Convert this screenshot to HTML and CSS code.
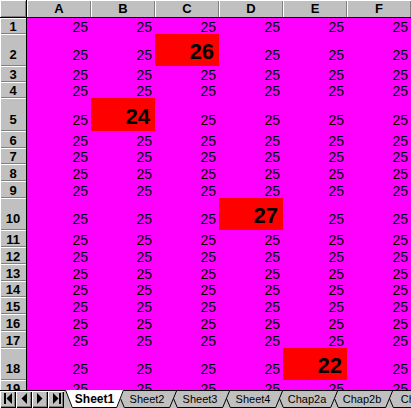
FILE: index.html
```html
<!DOCTYPE html>
<html>
<head>
<meta charset="utf-8">
<link rel="stylesheet" href="styles.css">
</head>
<body>
<div class="app">
  <div class="sheet">
    <div class="corner"></div>
    <div class="ch">A</div><div class="ch">B</div><div class="ch">C</div><div class="ch">D</div><div class="ch">E</div><div class="ch">F</div>

    <div class="rh">1</div><div class="c">25</div><div class="c">25</div><div class="c">25</div><div class="c">25</div><div class="c">25</div><div class="c">25</div>
    <div class="rh t">2</div><div class="c t">25</div><div class="c t">25</div><div class="c t big">26</div><div class="c t">25</div><div class="c t">25</div><div class="c t">25</div>
    <div class="rh">3</div><div class="c">25</div><div class="c">25</div><div class="c">25</div><div class="c">25</div><div class="c">25</div><div class="c">25</div>
    <div class="rh">4</div><div class="c">25</div><div class="c">25</div><div class="c">25</div><div class="c">25</div><div class="c">25</div><div class="c">25</div>
    <div class="rh t">5</div><div class="c t">25</div><div class="c t big">24</div><div class="c t">25</div><div class="c t">25</div><div class="c t">25</div><div class="c t">25</div>
    <div class="rh">6</div><div class="c">25</div><div class="c">25</div><div class="c">25</div><div class="c">25</div><div class="c">25</div><div class="c">25</div>
    <div class="rh">7</div><div class="c">25</div><div class="c">25</div><div class="c">25</div><div class="c">25</div><div class="c">25</div><div class="c">25</div>
    <div class="rh">8</div><div class="c">25</div><div class="c">25</div><div class="c">25</div><div class="c">25</div><div class="c">25</div><div class="c">25</div>
    <div class="rh">9</div><div class="c">25</div><div class="c">25</div><div class="c">25</div><div class="c">25</div><div class="c">25</div><div class="c">25</div>
    <div class="rh t">10</div><div class="c t">25</div><div class="c t">25</div><div class="c t">25</div><div class="c t big">27</div><div class="c t">25</div><div class="c t">25</div>
    <div class="rh">11</div><div class="c">25</div><div class="c">25</div><div class="c">25</div><div class="c">25</div><div class="c">25</div><div class="c">25</div>
    <div class="rh">12</div><div class="c">25</div><div class="c">25</div><div class="c">25</div><div class="c">25</div><div class="c">25</div><div class="c">25</div>
    <div class="rh">13</div><div class="c">25</div><div class="c">25</div><div class="c">25</div><div class="c">25</div><div class="c">25</div><div class="c">25</div>
    <div class="rh">14</div><div class="c">25</div><div class="c">25</div><div class="c">25</div><div class="c">25</div><div class="c">25</div><div class="c">25</div>
    <div class="rh">15</div><div class="c">25</div><div class="c">25</div><div class="c">25</div><div class="c">25</div><div class="c">25</div><div class="c">25</div>
    <div class="rh">16</div><div class="c">25</div><div class="c">25</div><div class="c">25</div><div class="c">25</div><div class="c">25</div><div class="c">25</div>
    <div class="rh">17</div><div class="c">25</div><div class="c">25</div><div class="c">25</div><div class="c">25</div><div class="c">25</div><div class="c">25</div>
    <div class="rh t">18</div><div class="c t">25</div><div class="c t">25</div><div class="c t">25</div><div class="c t">25</div><div class="c t big">22</div><div class="c t">25</div>
    <div class="rh">19</div><div class="c">25</div><div class="c">25</div><div class="c">25</div><div class="c">25</div><div class="c">25</div><div class="c">25</div>
  </div>

  <div class="tabbar">
    <div class="nav">
      <div class="navbtn"><svg width="16" height="17" viewBox="0 0 16 17"><rect x="4" y="2" width="2" height="11" fill="#000"/><polygon points="12,2 12,13 6.5,7.5" fill="#000"/></svg></div>
      <div class="navbtn"><svg width="16" height="17" viewBox="0 0 16 17"><polygon points="11,2 11,13 5.5,7.5" fill="#000"/></svg></div>
      <div class="navbtn"><svg width="16" height="17" viewBox="0 0 16 17"><polygon points="5,2 5,13 10.5,7.5" fill="#000"/></svg></div>
      <div class="navbtn"><svg width="16" height="17" viewBox="0 0 16 17"><polygon points="5,2 5,13 10.5,7.5" fill="#000"/><rect x="11" y="2" width="2" height="11" fill="#000"/></svg></div>
    </div>
    <div class="tabs">
      <div class="tab active">
        <svg class="tabshape" width="59" height="18" viewBox="0 0 59 18"><path d="M0 0 L7 17.5 L52 17.5 L59 0 Z" fill="#fff"/><path d="M0.5 0 L7.3 17.5 L51.7 17.5 L58.5 0" fill="none" stroke="#000" stroke-width="1"/></svg>
        <span class="tablabel">Sheet1</span>
      </div>
      <div class="tab">
        <svg class="tabshape" width="60" height="18" viewBox="0 0 60 18"><path d="M3.7 9 L7.3 17.5 L52.7 17.5 L59.5 1" fill="none" stroke="#000" stroke-width="1"/></svg>
        <span class="tablabel">Sheet2</span>
      </div>
      <div class="tab">
        <svg class="tabshape" width="60" height="18" viewBox="0 0 60 18"><path d="M3.7 9 L7.3 17.5 L52.7 17.5 L59.5 1" fill="none" stroke="#000" stroke-width="1"/></svg>
        <span class="tablabel">Sheet3</span>
      </div>
      <div class="tab">
        <svg class="tabshape" width="60" height="18" viewBox="0 0 60 18"><path d="M3.7 9 L7.3 17.5 L52.7 17.5 L59.5 1" fill="none" stroke="#000" stroke-width="1"/></svg>
        <span class="tablabel">Sheet4</span>
      </div>
      <div class="tab chap">
        <svg class="tabshape" width="62" height="18" viewBox="0 0 62 18"><path d="M3.7 9 L7.3 17.5 L54.7 17.5 L61.5 1" fill="none" stroke="#000" stroke-width="1"/></svg>
        <span class="tablabel">Chap2a</span>
      </div>
      <div class="tab chap">
        <svg class="tabshape" width="62" height="18" viewBox="0 0 62 18"><path d="M3.7 9 L7.3 17.5 L54.7 17.5 L61.5 1" fill="none" stroke="#000" stroke-width="1"/></svg>
        <span class="tablabel">Chap2b</span>
      </div>
      <div class="tab chap">
        <svg class="tabshape" width="62" height="18" viewBox="0 0 62 18"><path d="M3.7 9 L7.3 17.5 L54.7 17.5 L61.5 1" fill="none" stroke="#000" stroke-width="1"/></svg>
        <span class="tablabel">Chap3</span>
      </div>
    </div>
  </div>
</div>
</body>
</html>
```

FILE: styles.css
```css
html, body {
  margin: 0;
  padding: 0;
}

body {
  width: 411px;
  height: 408px;
  overflow: hidden;
  background: #c0c0c0;
  font-family: "Liberation Sans", Arial, sans-serif;
  color: #000;
}

.app {
  display: flex;
  flex-direction: column;
  width: 411px;
  height: 408px;
}

.sheet {
  height: 390px;
  flex: 0 0 390px;
  overflow: hidden;
  display: grid;
  grid-template-columns: 27px repeat(6, 64px);
  grid-template-rows: 18px 16px 32px 16px 16px 33px 17px 16px 17px 17px 32px 17px 17px 17px 16px 17px 17px 17px 32px 16px;
  background: #ff00ff;
}

.corner {
  background: #c0c0c0;
  border-right: 1px solid #000;
  border-bottom: 1px solid #000;
  box-shadow: inset 1px 1px #fff, inset -1px -1px #808080;
}

.ch {
  background: #c0c0c0;
  border-bottom: 1px solid #000;
  box-shadow: inset 1px 1px #fff, inset -1px 0 #808080;
  display: flex;
  align-items: flex-end;
  justify-content: center;
  font-weight: bold;
  font-size: 13px;
  line-height: 14px;
  padding-bottom: 1px;
}

.rh {
  background: #c0c0c0;
  border-right: 1px solid #000;
  box-shadow: inset 1px 1px #fff, inset 0 -1px #808080;
  display: flex;
  align-items: flex-end;
  justify-content: center;
  font-weight: bold;
  font-size: 13px;
  line-height: 14px;
}

.rh.t {
  padding-bottom: 4px;
}

.c {
  display: flex;
  align-items: flex-end;
  justify-content: flex-end;
  padding-right: 3px;
  font-size: 14px;
  line-height: 14px;
}

.c.t {
  padding-bottom: 4px;
}

.c.big {
  background: #ff0000;
  font-weight: bold;
  font-size: 22px;
  line-height: 22px;
  padding-right: 5px;
  padding-bottom: 3px;
}

.tabbar {
  flex: 0 0 18px;
  height: 18px;
  display: flex;
  overflow: hidden;
  background: linear-gradient(#000 0 1px, #c0c0c0 1px);
}

.nav {
  display: flex;
  margin-right: 1px;
  padding-top: 1px;
}

.navbtn {
  width: 16px;
  height: 17px;
  background: #c0c0c0;
  box-shadow: inset 1px 1px #fff, inset -1px -1px #000, inset -2px -2px #808080;
}

.navbtn svg {
  display: block;
}

.tabs {
  display: flex;
  flex: 1;
  min-width: 0;
  overflow: hidden;
}

/* each tab box is one pitch wide; its slanted outline reaches 7px into the next one */
.tab {
  position: relative;
  box-sizing: border-box;
  flex: 0 0 53px;
  width: 53px;
  height: 18px;
  padding-left: 7px;
  display: flex;
  align-items: center;
  justify-content: center;
  font-size: 11px;
  line-height: 17px;
}

.tab.active {
  flex-basis: 52px;
  width: 52px;
  font-weight: bold;
  font-size: 12px;
  z-index: 1;
}

.tab.chap {
  flex-basis: 55px;
  width: 55px;
}

.tabshape {
  position: absolute;
  left: 0;
  top: 0;
  display: block;
  overflow: visible;
}

.tablabel {
  position: relative;
  white-space: nowrap;
}
```
